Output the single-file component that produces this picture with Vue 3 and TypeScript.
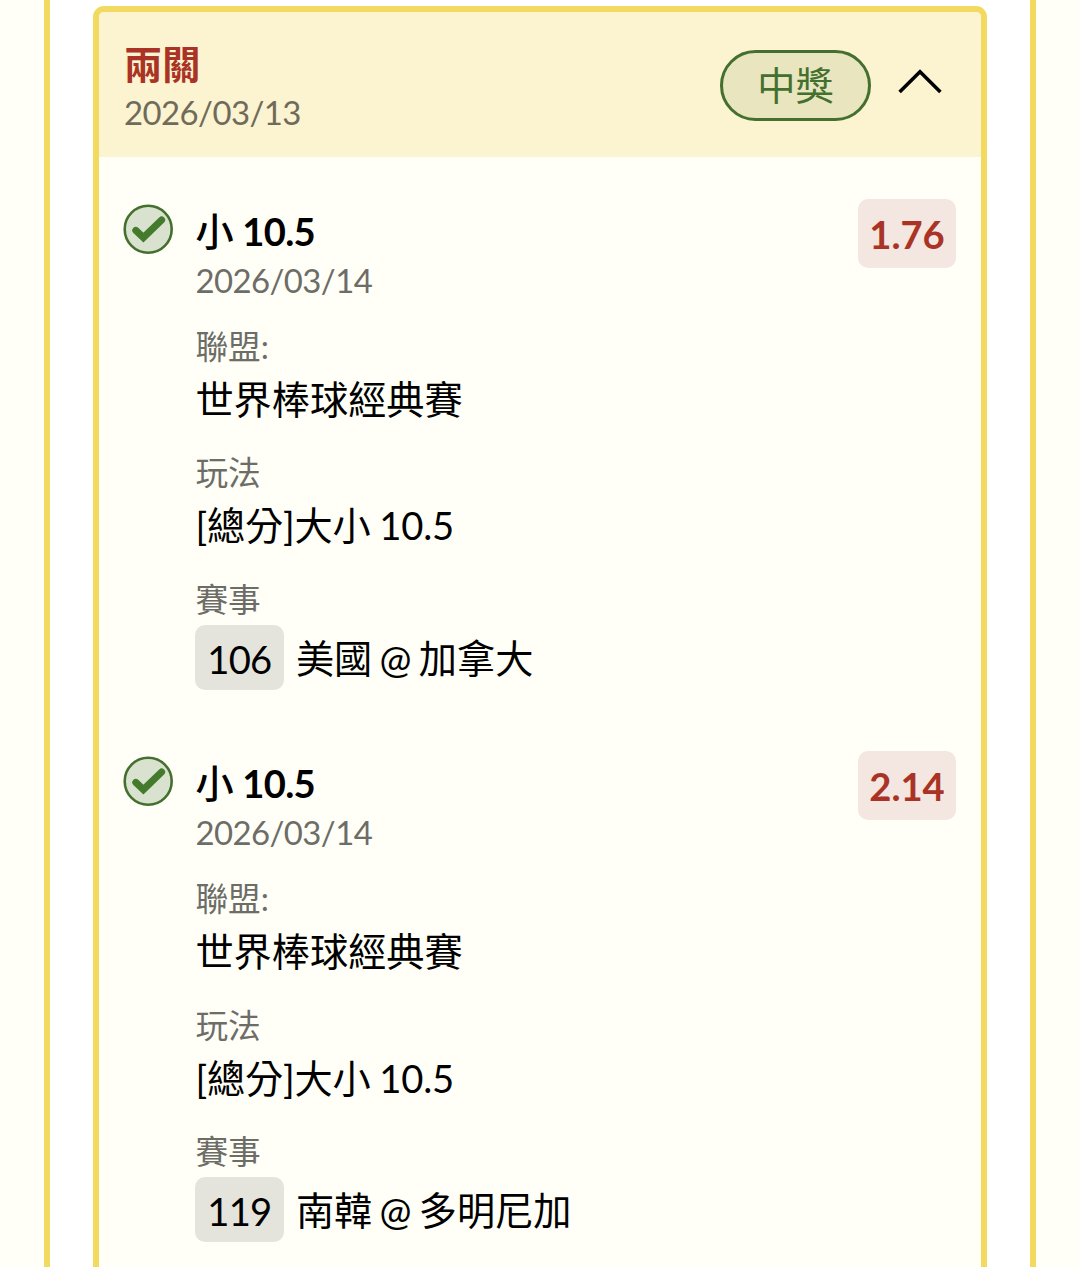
<script setup lang="ts">
interface Leg {
  pick: string
  line: string
  date: string
  odds: string
  league: string
  play: string
  code: string
  away: string
  home: string
}

const legs: Leg[] = [
  {
    pick: '小',
    line: '10.5',
    date: '2026/03/14',
    odds: '1.76',
    league: '世界棒球經典賽',
    play: '[總分]大小 10.5',
    code: '106',
    away: '美國',
    home: '加拿大',
  },
  {
    pick: '小',
    line: '10.5',
    date: '2026/03/14',
    odds: '2.14',
    league: '世界棒球經典賽',
    play: '[總分]大小 10.5',
    code: '119',
    away: '南韓',
    home: '多明尼加',
  },
]
</script>

<template>
  <div class="page">
    <main class="panel">
      <section class="bet">
        <header class="bet-head">
          <div class="bet-info">
            <h2 class="bet-title">兩關</h2>
            <div class="bet-date">2026/03/13</div>
          </div>
          <span class="status">中獎</span>
          <svg class="chevron" viewBox="0 0 44 28" fill="none" stroke="#000" stroke-width="3.6">
            <path d="M1.6 25 22 4.8 42.4 25" />
          </svg>
        </header>
        <article v-for="leg in legs" :key="leg.code" class="leg">
          <svg class="check" viewBox="0 0 50 50" fill="none">
            <circle cx="25.2" cy="25.2" r="23.5" fill="#d9e2cf" stroke="#44702f" stroke-width="2.6" />
            <path
              d="M12.8 26.4 20.4 33.6 38.6 15.9"
              stroke="#437a2b"
              stroke-width="7"
              stroke-linecap="round"
              stroke-linejoin="miter"
            />
          </svg>
          <div class="leg-body">
            <div class="pick"><span class="side">{{ leg.pick }}</span> {{ leg.line }}</div>
            <div class="leg-date">{{ leg.date }}</div>
            <dl class="facts">
              <dt>聯盟:</dt>
              <dd>{{ leg.league }}</dd>
              <dt>玩法</dt>
              <dd class="play">{{ leg.play }}</dd>
              <dt>賽事</dt>
              <dd class="match">
                <span class="code">{{ leg.code }}</span>
                <span class="teams">{{ leg.away }} @ {{ leg.home }}</span>
              </dd>
            </dl>
          </div>
          <span class="odds">{{ leg.odds }}</span>
        </article>
      </section>
    </main>
  </div>
</template>

<style>
body {
  margin: 0;
  background: #fffff7;
}
</style>

<style scoped>
.page {
  box-sizing: border-box;
  height: 1267px;
  padding: 0 44px;
  overflow: hidden;
  background: #fffff7;
  color: #000;
  font-family: Lato, 'Noto Sans CJK TC', sans-serif;
  font-size: 38.2px;
}

.panel {
  box-sizing: border-box;
  height: 1267px;
  padding: 6px 43px 0;
  border: solid #f1da5f;
  border-width: 0 6px;
  background: #fff;
}

.bet {
  box-sizing: border-box;
  height: 1300px;
  border: 6px solid #f1da5f;
  border-radius: 11px;
  overflow: hidden;
  background: #fffff7;
}

.bet-head {
  box-sizing: border-box;
  display: flex;
  align-items: flex-start;
  height: 145px;
  padding: 28px 39px 0 25px;
  background: #fcf3d0;
}

.bet-info {
  flex: 1;
}

.bet-title {
  margin: 0;
  color: #a93425;
  font-size: 38.2px;
  font-weight: 700;
  line-height: 49px;
}

.bet-date {
  color: #6f6b5b;
  font-size: 32.9px;
  letter-spacing: -0.55px;
  line-height: 47px;
}

.status {
  box-sizing: border-box;
  width: 151px;
  height: 71px;
  margin: 10px 27px 0 0;
  border: 3px solid #44702f;
  border-radius: 36px;
  background: #e8e5bf;
  color: #44702f;
  line-height: 65px;
  text-align: center;
}

.chevron {
  width: 44px;
  height: 28px;
  margin-top: 27px;
}

.leg {
  box-sizing: border-box;
  display: flex;
  align-items: flex-start;
  height: 552.3px;
  padding: 42px 25px 0 24px;
}

.check {
  width: 50px;
  height: 50px;
  margin-top: 5px;
}

.leg-body {
  flex: 1;
  margin: 8px 0 0 22.4px;
}

.pick {
  font-weight: 700;
  letter-spacing: -0.7px;
  word-spacing: 0.8px;
  line-height: 49px;
}

.side {
  font-weight: 500;
}

.leg-date {
  color: #6d6d68;
  font-size: 32.9px;
  letter-spacing: -0.55px;
  line-height: 49px;
}

.facts {
  margin: 17px 0 0;
}

dt {
  color: #6d6d68;
  font-size: 32.7px;
  line-height: 49px;
}

dd {
  margin: 0 0 20px;
  line-height: 57.3px;
}

.play {
  letter-spacing: -0.15px;
  word-spacing: -1px;
}

.match {
  display: flex;
  align-items: flex-start;
  gap: 12px;
}

.code {
  box-sizing: border-box;
  width: 89px;
  height: 65px;
  margin: 1px 0 0 -0.5px;
  border-radius: 10px;
  background: #e4e4dd;
  letter-spacing: -0.7px;
  line-height: 69px;
  text-align: center;
}

.teams {
  line-height: 68px;
  word-spacing: -2.5px;
}

.odds {
  box-sizing: border-box;
  width: 98px;
  height: 69px;
  border-radius: 10px;
  background: #f4e6e0;
  color: #a93425;
  font-weight: 700;
  line-height: 71px;
  text-align: center;
}
</style>
